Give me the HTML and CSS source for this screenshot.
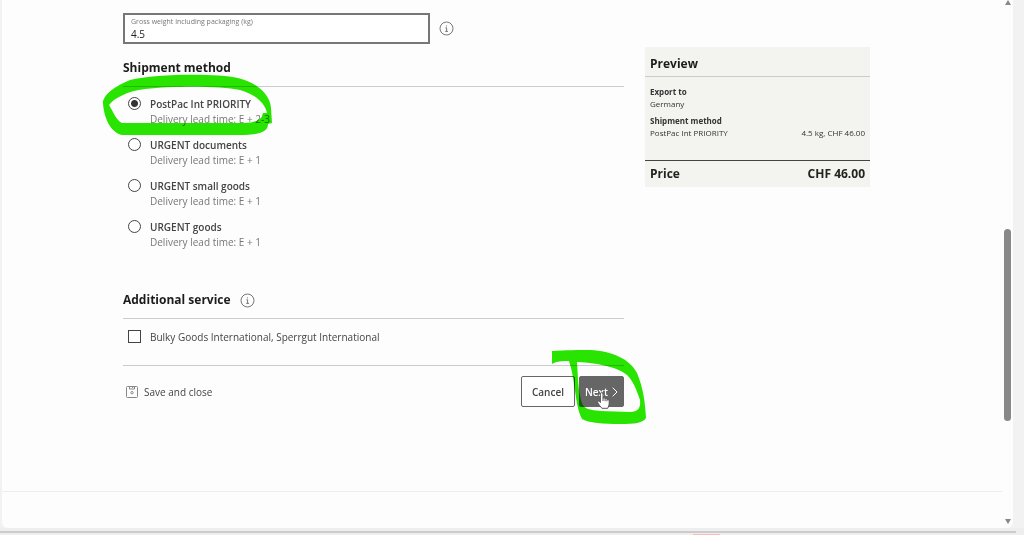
FILE: index.html
```html
<!DOCTYPE html>
<html lang="en">
<head>
<meta charset="UTF-8" />
<meta name="viewport" content="width=device-width, initial-scale=1" />
<title>Shipment method</title>
<link rel="stylesheet" href="styles.css">
</head>
<body>

<div class="window">
  <div class="page">
    <main class="layout">
      <form class="form">
        <div class="field-row">
          <div class="field">
            <label for="weight">Gross weight including packaging (kg)</label>
            <input type="text" id="weight" value="4.5" />
          </div>
          <svg class="info" viewBox="0 0 15 15" role="img" aria-label="Information">
            <circle cx="7.5" cy="7.5" r="6.5" />
            <path d="M7.5 4.4v1M6.4 6.8h1.2v3.4M6.2 10.4h2.8" />
          </svg>
        </div>

        <h2>Shipment method</h2>
        <div class="options">
          <div class="option">
            <input type="radio" name="method" id="priority" checked />
            <label for="priority">PostPac Int PRIORITY<small>Delivery lead time: E + 2-3</small></label>
            <svg class="marker marker-method" viewBox="100 73 176 66" aria-hidden="true">
              <path d="M103 103C103 95 115 86 130 80C155 74 215 73 238 78C258 83 270 95 271 108L272 123L268 124C268 131 262 134 245 135L122 135C112 133 104 120 103 103ZM109 105C114 113 116 120 122 123L245 123C253 123 261 120 262 116L263 113L267 113C265 103 255 94 240 90C220 86 175 86 145 89C128 91 114 98 109 105Z" />
            </svg>
          </div>
          <div class="option">
            <input type="radio" name="method" id="documents" />
            <label for="documents">URGENT documents<small>Delivery lead time: E + 1</small></label>
          </div>
          <div class="option">
            <input type="radio" name="method" id="small-goods" />
            <label for="small-goods">URGENT small goods<small>Delivery lead time: E + 1</small></label>
          </div>
          <div class="option">
            <input type="radio" name="method" id="goods" />
            <label for="goods">URGENT goods<small>Delivery lead time: E + 1</small></label>
          </div>
        </div>

        <h2>Additional service
          <svg class="info" viewBox="0 0 15 15" role="img" aria-label="Information">
            <circle cx="7.5" cy="7.5" r="6.5" />
            <path d="M7.5 4.4v1M6.4 6.8h1.2v3.4M6.2 10.4h2.8" />
          </svg>
        </h2>
        <div class="service">
          <input type="checkbox" id="bulky" />
          <label for="bulky">Bulky Goods International, Sperrgut International</label>
        </div>

        <div class="actions">
          <button type="button" class="btn-save">
            <svg class="icon-save" viewBox="0 0 12 12" aria-hidden="true">
              <path d="M.5 1.5q0-1 1-1h9q1 0 1 1v9q0 1-1 1h-9q-1 0-1-1zM3.5.5v2.5h5v-2.5M6.7 1v1" />
              <circle cx="6" cy="6.7" r="1.2" />
            </svg>
            Save and close
          </button>
          <button type="button" class="btn">Cancel</button>
          <button type="button" class="btn btn-next">Next
            <svg class="icon-next" viewBox="0 0 6 10" aria-hidden="true"><path d="M.7.7L5 5L.7 9.3" /></svg>
          </button>
          <svg class="marker marker-next" viewBox="550 348 98 78" aria-hidden="true">
            <path d="M552 351C565 350 580 350 590 350C612 351 630 359 637 373C643 388 645 400 646 418C643 423 635 424 620 424C604 424 588 423 582 419C577 410 576 395 574 385C573 377 572 370 569 361C562 361 557 361 552 364ZM577 362C578 376 578 392 582 403C584 409 590 410 600 411L630 412C638 412 641 408 640 400C636 388 633 381 627 375C619 368 600 363 577 362Z" />
          </svg>
          <svg class="cursor" viewBox="0 0 13 17" aria-hidden="true">
            <path d="M3.4 10.5V2.2Q3.4.6 4.7.6T6 2.2V6Q7.5 5.4 8.1 6.6Q9.5 6 10 7.3Q12.2 6.8 12.2 9V12Q12 14 10.7 16.3H4.9Q2.5 13.5.8 10.9Q.2 9.4 1.5 9.1Q2.5 9.2 3.4 10.5Z" />
            <path d="M6 6v3M8.1 6.6v2.6M10 7.3v2" />
          </svg>
        </div>
      </form>

      <aside class="preview">
        <h2>Preview</h2>
        <dl class="details">
          <dt>Export to</dt>
          <dd>Germany</dd>
          <dt>Shipment method</dt>
          <dd><span>PostPac Int PRIORITY</span><span>4.5 kg, CHF 46.00</span></dd>
        </dl>
        <div class="price"><span>Price</span><span>CHF 46.00</span></div>
      </aside>
    </main>
    <footer class="footer"></footer>
  </div>

  <div class="scrollbar" aria-hidden="true">
    <div class="arrow arrow-up"></div>
    <div class="thumb"></div>
    <div class="arrow arrow-down"></div>
  </div>
</div>

<div class="dock"><span class="dock-item"></span></div>

</body>
</html>
```

FILE: styles.css
```css
* {
  box-sizing: border-box;
}

body {
  margin: 0;
  min-height: 100vh;
  display: flex;
  flex-direction: column;
  background: #f2f2f2;
  color: #444;
  font-family: 'Open Sans', 'Noto Sans', sans-serif;
  font-size: 10px;
  line-height: 14px;
}

.window {
  flex: 1;
  display: flex;
  margin: 0 11px 0 2px;
  background: #fdfdfd;
  border-radius: 0 0 6px 6px;
}

.page {
  flex: 1;
  display: flex;
  flex-direction: column;
}

.layout {
  display: grid;
  grid-template-columns: 1fr 225px;
  gap: 21px;
  align-items: start;
  padding: 13px 132px 0 121px;
}

h2 {
  margin: 0;
  font-size: 12px;
  line-height: 20px;
  font-weight: 700;
  color: #1c1c1c;
}

/* Weight field */
.field-row {
  display: flex;
  align-items: center;
  gap: 9px;
  margin-bottom: 14px;
}

.field {
  width: 307px;
  height: 31px;
  padding: 2px 6px;
  border: 2px solid #777;
  display: flex;
  flex-direction: column;
  background: #fff;
}

.field label {
  font-size: 7px;
  line-height: 10px;
  color: #777;
}

.field input {
  width: 100%;
  padding: 0;
  border: none;
  background: none;
  font: inherit;
  font-weight: 500;
  line-height: 14px;
  color: #222;
  outline: none;
}

.info {
  width: 15px;
  height: 15px;
  fill: none;
  stroke: #777;
}

/* Options */
.form h2 {
  display: flex;
  align-items: center;
  gap: 9px;
  padding-bottom: 8px;
  border-bottom: 1px solid #ccc;
}

.options {
  display: flex;
  flex-direction: column;
  gap: 11px;
  padding: 10px 0 40px;
}

.option,
.service {
  position: relative;
  display: flex;
  align-items: flex-start;
  gap: 9px;
  padding-left: 5px;
}

.service label {
  font-weight: 500;
}

.option label {
  font-weight: 600;
}

.option small {
  display: block;
  font-size: 10px;
  line-height: 16px;
  font-weight: 400;
  color: #777;
}

input[type="radio"],
input[type="checkbox"] {
  appearance: none;
  width: 13px;
  height: 13px;
  margin: 0;
  border: 1px solid #444;
  background: #fff;
}

input[type="radio"] {
  border-radius: 50%;
}

input[type="radio"]:checked {
  background: radial-gradient(circle, #333 3px, #fff 4px);
}

.service {
  padding-top: 11px;
  padding-bottom: 21px;
}

/* Buttons */
.actions {
  position: relative;
  display: flex;
  align-items: center;
  gap: 4px;
  padding-top: 10px;
  border-top: 1px solid #ccc;
}

button {
  font: inherit;
  font-weight: 500;
  color: #444;
  cursor: pointer;
}

.btn-save {
  display: flex;
  align-items: center;
  gap: 6px;
  margin-right: auto;
  padding: 0 3px;
  border: none;
  background: none;
}

.icon-save {
  width: 12px;
  height: 12px;
  fill: none;
  stroke: #888;
}

.btn {
  display: flex;
  align-items: center;
  justify-content: center;
  gap: 4px;
  width: 54px;
  height: 31px;
  padding: 0;
  border: 1px solid #666;
  border-radius: 2px;
  background: #fff;
  font-weight: 600;
}

.btn-next {
  width: 45px;
  background: #666;
  color: #fff;
}

.icon-next {
  width: 6px;
  height: 10px;
  fill: none;
  stroke: #fff;
}

/* Hand-drawn highlights and pointer */
.marker {
  position: absolute;
  fill: #28e600;
  fill-rule: evenodd;
  mix-blend-mode: multiply;
  pointer-events: none;
}

.marker-method {
  left: -23px;
  top: -24px;
  width: 176px;
  height: 66px;
}

.marker-next {
  right: -24px;
  top: -18px;
  width: 98px;
  height: 78px;
}

.cursor {
  position: absolute;
  right: 14px;
  top: 26px;
  width: 13px;
  height: 17px;
  fill: #fff;
  stroke: #555;
  pointer-events: none;
}

/* Preview */
.preview {
  margin-top: 34px;
  background: #f3f4ef;
  color: #333;
  font-size: 8px;
  line-height: 12px;
}

.preview h2 {
  padding: 7px 5px 2px;
  border-bottom: 1px solid #ccc;
}

.details {
  margin: 0;
  padding: 9px 5px 16px;
  border-bottom: 1px solid #444;
}

.details dt {
  font-weight: 700;
}

.details dd {
  display: flex;
  justify-content: space-between;
  margin: 0 0 5px;
}

.price {
  display: flex;
  justify-content: space-between;
  padding: 3px 5px;
  font-size: 12px;
  line-height: 20px;
  font-weight: 700;
  color: #222;
}

.footer {
  height: 37px;
  margin-top: auto;
  border-top: 1px solid #eee;
}

/* Scrollbar */
.scrollbar {
  width: 11px;
  display: grid;
  grid-template-rows: 5px 224fr 191fr 98fr 5px;
  justify-items: center;
  padding-bottom: 4px;
}

.thumb {
  grid-row: 3;
  width: 7px;
  border-radius: 4px;
  background: #888;
}

.arrow {
  border: 3px solid transparent;
  border-top-width: 0;
  border-bottom-width: 0;
  width: 0;
  height: 5px;
}

.arrow-up {
  border-bottom: 5px solid #888;
}

.arrow-down {
  grid-row: 5;
  border-top: 5px solid #888;
}

.dock {
  height: 7px;
  padding-top: 3px;
  background: #eee;
}

.dock::before {
  content: "";
  display: block;
  height: 2px;
  margin-right: 8px;
  background: #ccc;
}

.dock-item {
  display: block;
  width: 27px;
  height: 1px;
  margin: 1px 0 0 693px;
  background: #f5bcb8;
}
```
